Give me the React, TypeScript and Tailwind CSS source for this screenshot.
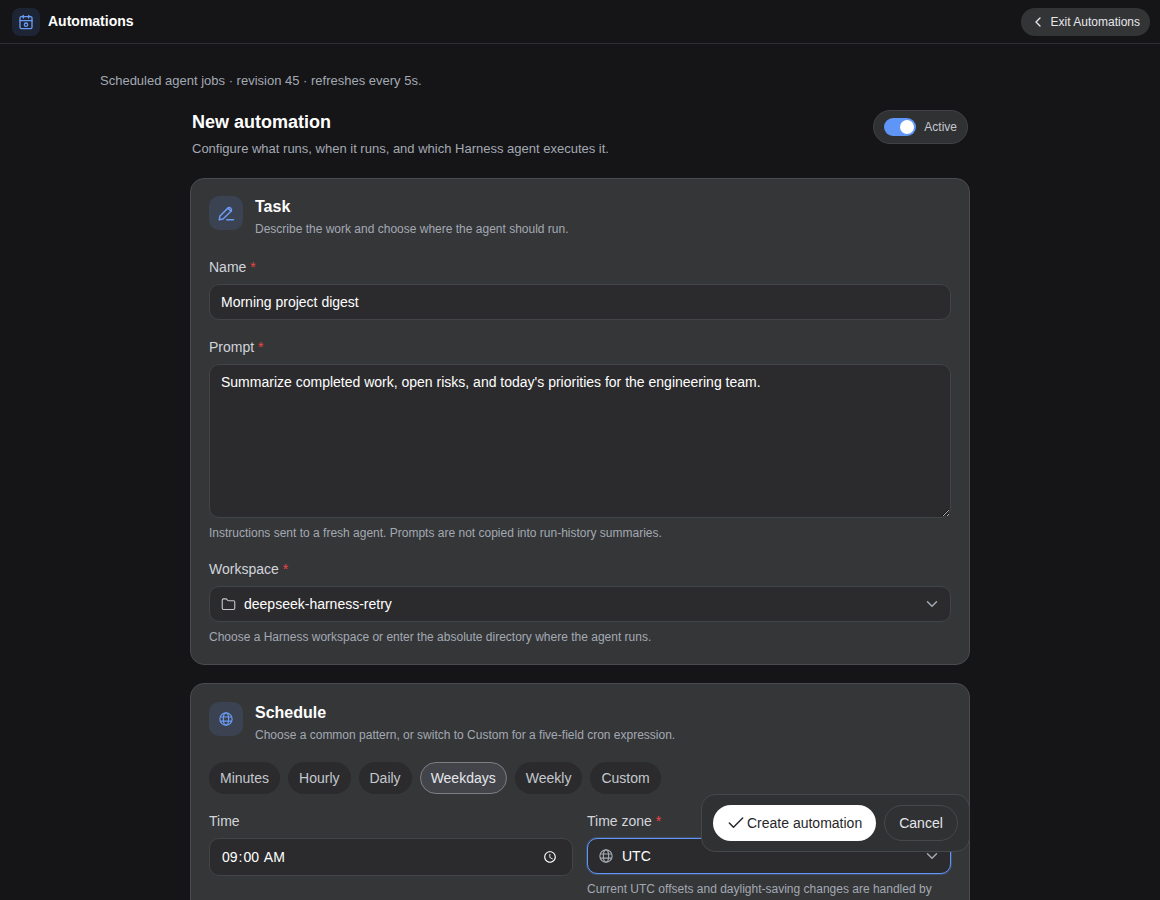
import { Check, ChevronDown, ChevronLeft, Folder } from "lucide-react";
import React from "react";

const font = { fontFamily: "'Liberation Sans', Arial, sans-serif" };

const Label = ({ text, required }: { text: string; required?: boolean }) => (
  <div className="h-[17px] text-[14px] leading-[17px] text-[#d1d5db] mb-2">
    {text}
    {required && <span className="text-[#ef4444]"> *</span>}
  </div>
);

const CalendarIcon = () => (
  <svg width="16" height="16" viewBox="0 0 24 24" fill="none" stroke="currentColor" strokeWidth="2" strokeLinecap="round" strokeLinejoin="round">
    <path d="M8 2v4" />
    <path d="M16 2v4" />
    <rect x="3" y="4" width="18" height="18" rx="2" />
    <path d="M3 10h18" />
    <circle cx="12" cy="16" r="2.5" />
  </svg>
);

const PenIcon = () => (
  <svg width="18" height="18" viewBox="0 0 24 24" fill="none" stroke="currentColor" strokeWidth="2" strokeLinecap="round" strokeLinejoin="round">
    <path d="M3 21l1-5L14.5 5.5a3 3 0 0 1 4.2 4.2L8 20z" />
    <path d="M14.5 5.5l4.2 4.2" />
    <path d="M13 21h9" />
  </svg>
);

const GlobeIcon = ({ size = 14, className }: { size?: number; className?: string }) => (
  <svg width={size} height={size} viewBox="0 0 24 24" fill="none" stroke="currentColor" strokeWidth="2" strokeLinecap="round" className={className}>
    <circle cx="12" cy="12" r="10.5" />
    <ellipse cx="12" cy="12" rx="4.5" ry="10.5" />
    <path d="M2.5 8.5h19" />
    <path d="M2.5 15.5h19" />
  </svg>
);

const CardHead = ({ icon, title, desc }: { icon: React.ReactNode; title: string; desc: string }) => (
  <div className="flex gap-3 h-[34px]">
    <div className="w-[34px] h-[34px] rounded-[10px] bg-[#3b4252] text-[#6b9bf2] flex items-center justify-center">
      {icon}
    </div>
    <div>
      <h2 className="text-[16px] leading-5 font-bold text-white mt-[1px]">{title}</h2>
      <p className="text-[12px] leading-4 mt-[4px] text-[#a3a9b3]">{desc}</p>
    </div>
  </div>
);

const pills = ["Minutes", "Hourly", "Daily", "Weekdays", "Weekly", "Custom"];

export default function App() {
  return (
    <div style={font} className="relative h-screen overflow-hidden bg-[#151517] text-white">
      {/* top bar */}
      <header className="h-11 border-b border-[#2e2f32] flex items-center justify-between pl-3 pr-[10px]">
        <div className="flex items-center gap-2">
          <div className="w-7 h-7 rounded-lg bg-[#1d2433] text-[#6b9bf2] flex items-center justify-center">
            <CalendarIcon />
          </div>
          <span className="text-[14px] font-bold">Automations</span>
        </div>
        <button className="h-7 rounded-full bg-[#333436] pl-[9px] pr-[10px] flex items-center gap-[5px] text-[12px] text-[#e5e7eb]">
          <ChevronLeft size={16} />
          Exit Automations
        </button>
      </header>

      <main className="pt-[29px] pl-[100px]">
        <p className="text-[13px] leading-4 text-[#a3a9b3]">Scheduled agent jobs · revision 45 · refreshes every 5s.</p>

        <div className="w-[780px] ml-[90px] mt-[21px]">
          <div className="flex justify-between pl-[2px] pr-[2px] h-[60px]">
            <div>
              <h1 className="text-[18px] leading-6">
                <span className="font-bold">New automation</span>
              </h1>
              <p className="text-[13px] leading-4 mt-[7px] text-[#a3a9b3]">
                Configure what runs, when it runs, and which Harness agent executes it.
              </p>
            </div>
            <div className="h-[34px] rounded-full border border-[#414246] bg-[#303133] flex items-center pl-[10px] pr-[10px] gap-2">
              <span className="w-8 h-[18px] rounded-full bg-[#5f95f7] flex items-center justify-end pr-[2px]">
                <span className="w-[14px] h-[14px] rounded-full bg-white" />
              </span>
              <span className="text-[12px] text-[#c4c8ce]">Active</span>
            </div>
          </div>

          {/* task */}
          <section className="mt-[8px] rounded-[14px] border border-[#4a4b4f] bg-[#353638] px-[18px] pt-[17px] pb-[19px]">
            <CardHead icon={<PenIcon />} title="Task" desc="Describe the work and choose where the agent should run." />

            <div className="mt-[29px]">
              <Label text="Name" required />
              <input
                readOnly
                value="Morning project digest"
                className="w-full h-9 rounded-[10px] border border-[#434448] bg-[#2b2b2d] px-[11px] text-[14px] text-white outline-none"
              />
            </div>

            <div className="mt-[19px]">
              <Label text="Prompt" required />
              <textarea
                readOnly
                value="Summarize completed work, open risks, and today's priorities for the engineering team."
                className="block w-full h-[154px] rounded-[10px] border border-[#434448] bg-[#2b2b2d] px-[11px] py-[8px] text-[14px] leading-[18px] text-white outline-none [color-scheme:dark]"
              />
              <p className="text-[12px] leading-4 mt-[7px] text-[#a3a9b3]">
                Instructions sent to a fresh agent. Prompts are not copied into run-history summaries.
              </p>
            </div>

            <div className="mt-[20px]">
              <Label text="Workspace" required />
              <div className="h-9 rounded-[10px] border border-[#434448] bg-[#2b2b2d] pl-[11px] pr-[9px] flex items-center text-[14px]">
                <Folder size={15} className="text-[#c4c8ce]" strokeWidth={1.75} />
                <span className="ml-[8px]">deepseek-harness-retry</span>
                <ChevronDown size={18} className="ml-auto text-[#a3a9b3]" />
              </div>
              <p className="text-[12px] leading-4 mt-[7px] text-[#a3a9b3]">
                Choose a Harness workspace or enter the absolute directory where the agent runs.
              </p>
            </div>
          </section>

          {/* schedule */}
          <section className="mt-[18px] rounded-[14px] border border-[#4a4b4f] bg-[#353638] px-[18px] pt-[18px] pb-12">
            <CardHead icon={<GlobeIcon />} title="Schedule" desc="Choose a common pattern, or switch to Custom for a five-field cron expression." />

            <div className="flex gap-2 mt-[26px]">
              {pills.map((p) => (
                <span
                  key={p}
                  className={
                    p === "Weekdays"
                      ? "h-8 px-[10px] rounded-full border border-[#7c7e84] bg-[#434449] flex items-center text-[14px] text-[#e5e7eb]"
                      : "h-8 px-[11px] rounded-full bg-[#2b2b2d] flex items-center text-[14px] text-[#c4c8ce]"
                  }
                >
                  {p}
                </span>
              ))}
            </div>

            <div className="grid grid-cols-2 gap-[14px] mt-[19px]">
              <div>
                <Label text="Time" />
                <input
                  type="time"
                  value="09:00"
                  onChange={() => {}}
                  className="block w-full h-[38px] rounded-[10px] border border-[#434448] bg-[#2b2b2d] pl-[11px] pr-[11px] text-[14px] text-white outline-none [color-scheme:dark]"
                />
              </div>
              <div>
                <Label text="Time zone" required />
                <div className="h-9 rounded-[10px] border border-[#5f95f7] ring-1 ring-[#5f95f7]/25 bg-[#2b2b2d] pl-[11px] pr-[9px] flex items-center text-[14px]">
                  <GlobeIcon size={14} className="text-[#a3a9b3]" />
                  <span className="ml-[9px]">UTC</span>
                  <ChevronDown size={18} className="ml-auto text-[#a3a9b3]" />
                </div>
                <p className="text-[12px] leading-4 mt-[7px] text-[#a3a9b3]">
                  Current UTC offsets and daylight-saving changes are handled by
                </p>
              </div>
            </div>
          </section>
        </div>
      </main>

      {/* floating actions */}
      <div className="absolute left-[701px] top-[794px] h-[58px] rounded-[14px] border border-[#47484c] bg-[#303133] flex items-center gap-2 px-[11px]">
        <button className="h-9 w-[163px] rounded-full bg-white text-[#26272a] text-[14px] flex items-center pl-[13px] gap-[1px]">
          <Check size={20} strokeWidth={1.75} />
          Create automation
        </button>
        <button className="h-9 w-[74px] rounded-full border border-[#47484c] text-[14px] text-[#e5e7eb]">Cancel</button>
      </div>
    </div>
  );
}
